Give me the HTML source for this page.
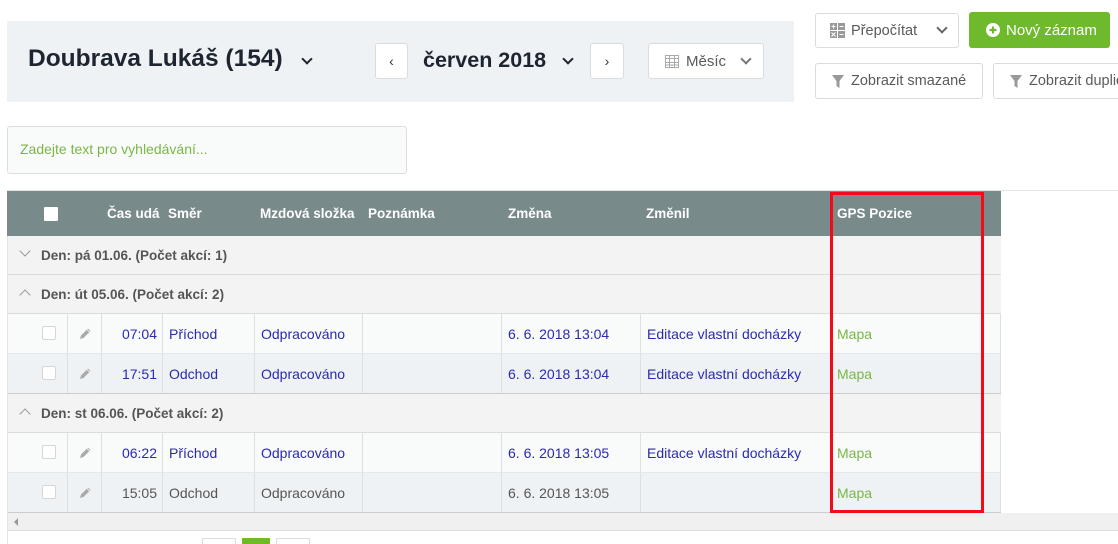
<!DOCTYPE html>
<html><head><meta charset="utf-8"><style>
*{box-sizing:border-box;margin:0;padding:0}
body{width:1118px;height:544px;overflow:hidden;background:#fff;font-family:"Liberation Sans",sans-serif;font-size:14px;position:relative;color:#555}
.a{position:absolute}
svg{flex-shrink:0}
.btn{position:absolute;border:1px solid #d9dcde;border-radius:3px;background:#fff;color:#5a5a5a;font-size:14px;display:flex;align-items:center}
.chev{display:inline-block;width:8px;height:8px;border-right:2px solid #555;border-bottom:2px solid #555;transform:rotate(45deg)}
.row{position:absolute;left:7px;width:994px}
.cell{position:absolute;top:0;height:100%;display:flex;align-items:center;border-left:1px solid #dde0e3;padding-left:6px}
.blue{color:#2a2ab0}
.gr{color:#7ab648}
.cb{width:14px;height:14px;border:1px solid #d6d6d6;background:#fff;border-radius:2px}
.grp{position:absolute;left:7px;width:994px;height:39px;background:#f3f3f3;border-bottom:1px solid #dcdcdc;font-weight:bold;color:#555;display:flex;align-items:center;padding-left:34px;font-size:13.5px}
.gi{position:absolute;left:14px;top:15px;width:8px;height:8px;border-left:1.5px solid #999;border-top:1.5px solid #999}
.th{position:absolute;top:0;height:45px;display:flex;align-items:center;color:#fff;font-weight:bold;font-size:13.5px}
</style></head><body>
<div class="a" style="left:7px;top:21px;width:787px;height:81px;background:#eff2f5"></div>
<div class="a" style="left:28px;top:45px;font-size:24.5px;font-weight:bold;color:#1d2530">Doubrava Lukáš (154)</div>
<div class="a chev" style="left:303px;top:55px;border-color:#1d2530"></div>
<div class="btn" style="left:375px;top:43px;width:33px;height:36px;justify-content:center;color:#333">&#8249;</div>
<div class="a" style="left:423px;top:48px;font-size:21.5px;font-weight:bold;color:#1d2530">červen 2018</div>
<div class="a chev" style="left:564px;top:55px;border-color:#1d2530"></div>
<div class="btn" style="left:590px;top:43px;width:34px;height:36px;justify-content:center;color:#333">&#8250;</div>
<div class="btn" style="left:648px;top:43px;width:116px;height:36px;padding-left:16px"><svg width="14" height="14" viewBox="0 0 14 14"><rect x="0.5" y="1.5" width="13" height="12" fill="none" stroke="#aaa"/><path d="M0 4.5h14M4.5 2v12M9.5 2v12M0 8.5h14M0 11h14" stroke="#aaa"/></svg><span style="margin-left:7px;font-size:15px">Měsíc</span><span class="chev" style="position:absolute;left:93px;top:11px;border-color:#777"></span></div>

<div class="btn" style="left:815px;top:13px;width:144px;height:35px;padding-left:14px"><svg width="15" height="15" viewBox="0 0 15 15"><rect x="0" y="0" width="7" height="7" fill="#999"/><rect x="8" y="0" width="7" height="7" fill="#999"/><rect x="0" y="8" width="7" height="7" fill="#999"/><rect x="8" y="8" width="7" height="7" fill="#999"/><path d="M1.5 3.5h4M3.5 1.5v4M9.5 3.5h4M1.5 9.5l4 4M5.5 9.5l-4 4M9.5 11.5h4" stroke="#fff"/></svg><span style="margin-left:6px;font-size:14.5px">Přepočítat</span><span class="chev" style="position:absolute;left:122px;top:10px;border-color:#666"></span></div>
<div class="a" style="left:969px;top:12px;width:141px;height:36px;background:#6fba2c;border-radius:3px;color:#fff;font-size:15px;display:flex;align-items:center;padding-left:17px"><svg width="14" height="14" viewBox="0 0 14 14"><circle cx="7" cy="7" r="7" fill="#fff"/><path d="M7 3.5v7M3.5 7h7" stroke="#6fba2c" stroke-width="2.2"/></svg><span style="margin-left:6px">Nový záznam</span></div>
<div class="btn" style="left:815px;top:63px;width:168px;height:36px;padding-left:16px"><svg width="12" height="13" viewBox="0 0 12 13"><path d="M0 0h12L7.5 6v7l-3-2V6z" fill="#999"/></svg><span style="margin-left:7px;font-size:14.5px">Zobrazit smazané</span></div>
<div class="btn" style="left:993px;top:63px;width:160px;height:36px;padding-left:16px;white-space:nowrap"><svg width="12" height="13" viewBox="0 0 12 13"><path d="M0 0h12L7.5 6v7l-3-2V6z" fill="#999"/></svg><span style="margin-left:7px;font-size:14.5px">Zobrazit duplicity</span></div>

<div class="a" style="left:7px;top:126px;width:400px;height:48px;border:1px solid #dcdfe2;border-radius:3px;background:#f9fafa;color:#7ab648;font-size:14px;padding:14px 12px">Zadejte text pro vyhledávání...</div>

<div class="a" style="left:7px;top:190px;width:1111px;height:1px;background:#e3e3e3"></div>
<div class="a" style="left:7px;top:191px;width:994px;height:45px;background:#798a8b">
<div class="a" style="left:37px;top:16px;width:14px;height:14px;background:#fff;border-radius:1px"></div>
<div class="th" style="left:100px">Čas udá</div>
<div class="th" style="left:161px">Směr</div>
<div class="th" style="left:253px">Mzdová složka</div>
<div class="th" style="left:361px">Poznámka</div>
<div class="th" style="left:501px">Změna</div>
<div class="th" style="left:639px">Změnil</div>
<div class="th" style="left:830px">GPS Pozice</div>
</div>

<div class="grp" style="top:236px"><span class="gi" style="transform:rotate(225deg);top:11px"></span>Den: pá 01.06. (Počet akcí: 1)</div>
<div class="grp" style="top:275px"><span class="gi" style="transform:rotate(45deg);top:16px"></span>Den: út 05.06. (Počet akcí: 2)</div>

<div class="row" style="top:314px;height:40px;background:#f9fafa;border-bottom:1px solid #e5e7ea">
<div class="a cb" style="left:35px;top:12px"></div>
<div class="cell" style="left:60px;width:34px;padding-left:10px"><svg width="14" height="14" viewBox="0 0 14 14"><path d="M2 12l1-3.5 7-7 2.5 2.5-7 7z" fill="#aaa"/><path d="M9 2.5l2.5 2.5" stroke="#eee"/></svg></div>
<div class="cell blue" style="left:94px;width:61px;justify-content:flex-end;padding-right:5px">07:04</div>
<div class="cell blue" style="left:155px;width:92px">Příchod</div>
<div class="cell blue" style="left:247px;width:108px">Odpracováno</div>
<div class="cell" style="left:355px;width:139px"></div>
<div class="cell blue" style="left:494px;width:139px">6. 6. 2018 13:04</div>
<div class="cell blue" style="left:633px;width:190px">Editace vlastní docházky</div>
<div class="cell gr" style="left:823px;width:171px;border-right:1px solid #dde0e3">Mapa</div>
</div>
<div class="row" style="top:354px;height:40px;background:#eff2f5;border-bottom:1px solid #ccc">
<div class="a cb" style="left:35px;top:12px"></div>
<div class="cell" style="left:60px;width:34px;padding-left:10px"><svg width="14" height="14" viewBox="0 0 14 14"><path d="M2 12l1-3.5 7-7 2.5 2.5-7 7z" fill="#aaa"/><path d="M9 2.5l2.5 2.5" stroke="#eee"/></svg></div>
<div class="cell blue" style="left:94px;width:61px;justify-content:flex-end;padding-right:5px">17:51</div>
<div class="cell blue" style="left:155px;width:92px">Odchod</div>
<div class="cell blue" style="left:247px;width:108px">Odpracováno</div>
<div class="cell" style="left:355px;width:139px"></div>
<div class="cell blue" style="left:494px;width:139px">6. 6. 2018 13:04</div>
<div class="cell blue" style="left:633px;width:190px">Editace vlastní docházky</div>
<div class="cell gr" style="left:823px;width:171px;border-right:1px solid #dde0e3">Mapa</div>
</div>

<div class="grp" style="top:394px"><span class="gi" style="transform:rotate(45deg);top:16px"></span>Den: st 06.06. (Počet akcí: 2)</div>

<div class="row" style="top:433px;height:40px;background:#f9fafa;border-bottom:1px solid #e5e7ea">
<div class="a cb" style="left:35px;top:12px"></div>
<div class="cell" style="left:60px;width:34px;padding-left:10px"><svg width="14" height="14" viewBox="0 0 14 14"><path d="M2 12l1-3.5 7-7 2.5 2.5-7 7z" fill="#aaa"/><path d="M9 2.5l2.5 2.5" stroke="#eee"/></svg></div>
<div class="cell blue" style="left:94px;width:61px;justify-content:flex-end;padding-right:5px">06:22</div>
<div class="cell blue" style="left:155px;width:92px">Příchod</div>
<div class="cell blue" style="left:247px;width:108px">Odpracováno</div>
<div class="cell" style="left:355px;width:139px"></div>
<div class="cell blue" style="left:494px;width:139px">6. 6. 2018 13:05</div>
<div class="cell blue" style="left:633px;width:190px">Editace vlastní docházky</div>
<div class="cell gr" style="left:823px;width:171px;border-right:1px solid #dde0e3">Mapa</div>
</div>
<div class="row" style="top:473px;height:40px;background:#eff2f5;border-bottom:1px solid #ccc">
<div class="a cb" style="left:35px;top:12px"></div>
<div class="cell" style="left:60px;width:34px;padding-left:10px"><svg width="14" height="14" viewBox="0 0 14 14"><path d="M2 12l1-3.5 7-7 2.5 2.5-7 7z" fill="#aaa"/><path d="M9 2.5l2.5 2.5" stroke="#eee"/></svg></div>
<div class="cell" style="left:94px;width:61px;justify-content:flex-end;padding-right:5px">15:05</div>
<div class="cell" style="left:155px;width:92px">Odchod</div>
<div class="cell" style="left:247px;width:108px">Odpracováno</div>
<div class="cell" style="left:355px;width:139px"></div>
<div class="cell" style="left:494px;width:139px">6. 6. 2018 13:05</div>
<div class="cell" style="left:633px;width:190px"></div>
<div class="cell gr" style="left:823px;width:171px;border-right:1px solid #dde0e3">Mapa</div>
</div>

<div class="a" style="left:7px;top:513px;width:1111px;height:18px;background:#f0f0f0;border-bottom:1px solid #ddd"></div>
<div class="a" style="left:14px;top:518px;width:0;height:0;border-top:4px solid transparent;border-bottom:4px solid transparent;border-right:4px solid #999"></div>
<div class="a" style="left:7px;top:236px;width:1px;height:308px;background:#e3e3e3"></div>
<div class="a" style="left:202px;top:538px;width:34px;height:6px;border:1px solid #ddd;border-bottom:none"></div>
<div class="a" style="left:242px;top:538px;width:28px;height:6px;background:#6fba2c"></div>
<div class="a" style="left:276px;top:538px;width:34px;height:6px;border:1px solid #ddd;border-bottom:none"></div>

<div class="a" style="left:830px;top:192px;width:154px;height:321px;border:3px solid #f50a1a"></div>
</body></html>
